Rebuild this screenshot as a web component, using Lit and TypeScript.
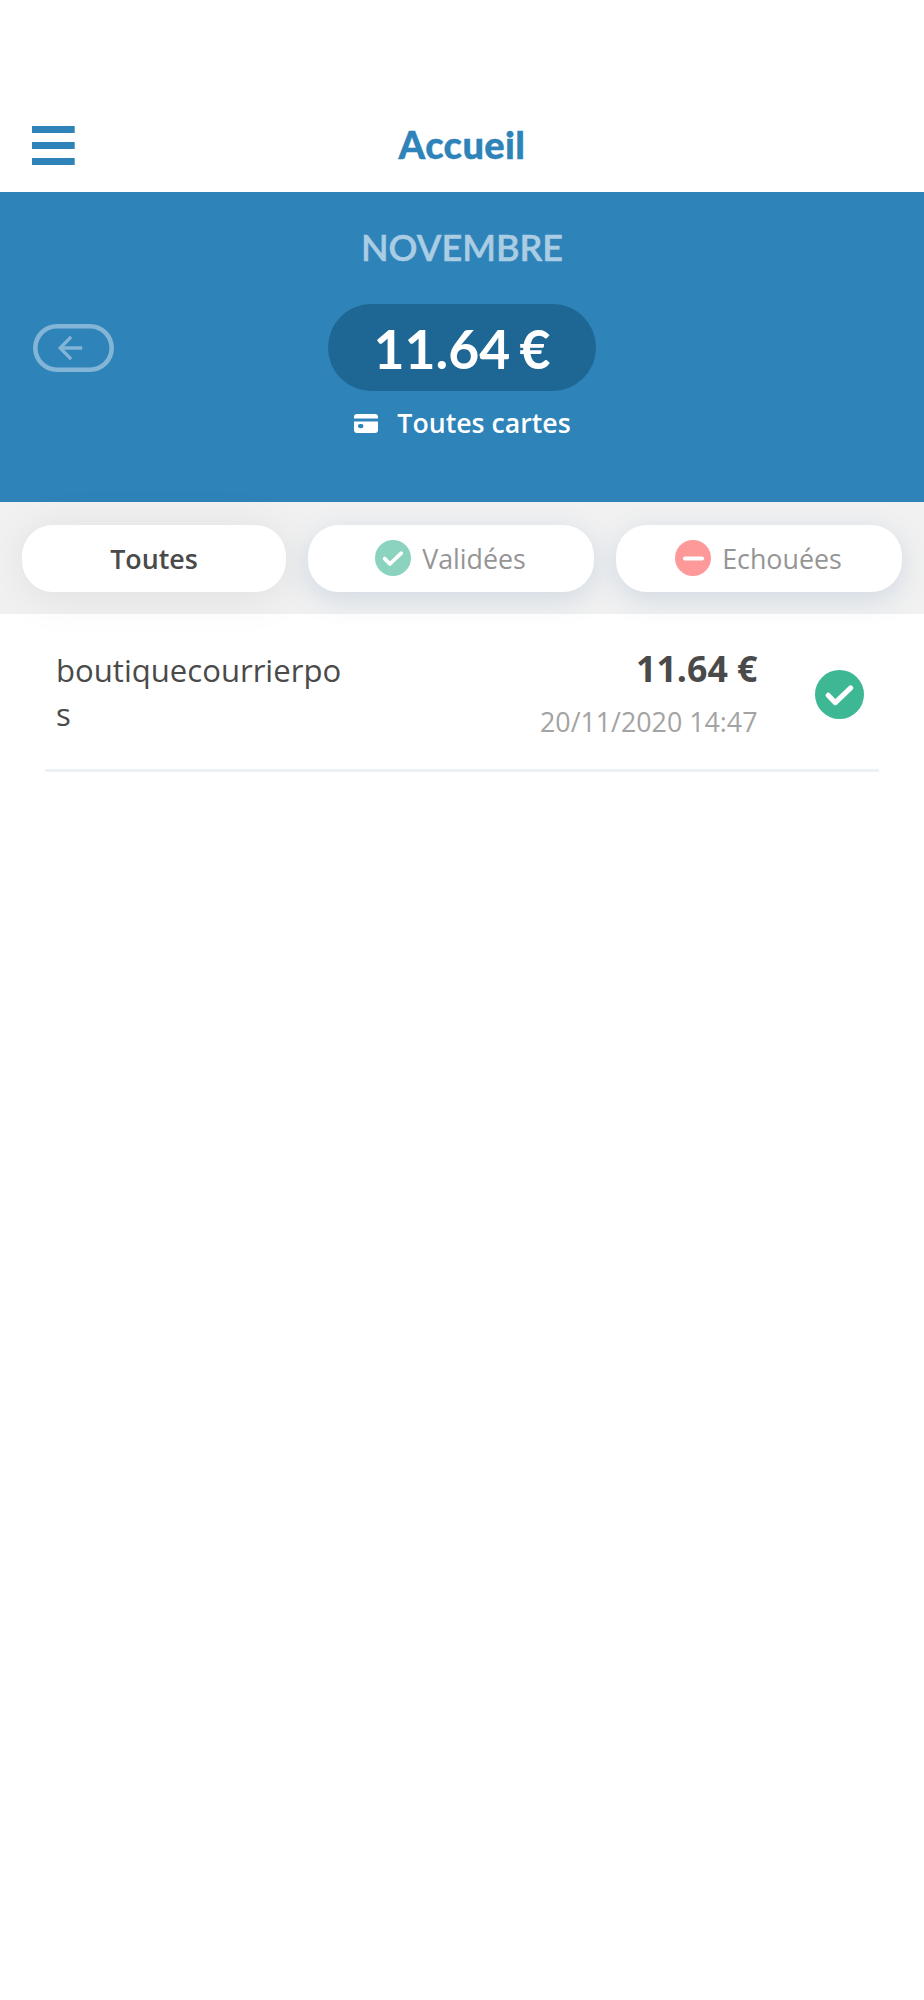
import { LitElement, html, css, svg } from "lit";
import { customElement } from "lit/decorators.js";

const check = svg`<circle cx="24" cy="24" r="24" fill="currentColor"/><path d="M12.9 24.8 19.9 32 35 17.6" fill="none" stroke="#fff" stroke-width="5" stroke-linecap="round" stroke-linejoin="round"/>`;
const minus = svg`<circle cx="24" cy="24" r="24" fill="currentColor"/><path d="M13.3 24.6H36" stroke="#fff" stroke-width="5.4" stroke-linecap="round"/>`;

@customElement("app-root")
export class AppRoot extends LitElement {
  static styles = css`
    :host { display: block; box-sizing: border-box; height: 2000px; overflow: hidden; background: #fff; font-family: "Open Sans", "Noto Sans", sans-serif; color: #4a4a4a; }
    * { box-sizing: border-box; }
    svg { display: block; flex: none; }
    span { white-space: nowrap; }
    .header { display: grid; grid-template-columns: 1fr auto 1fr; height: 192px; padding: 99px 32px 0; align-items: center; color: #2e83b9; }
    .title { margin-top: -4px; font: 900 38px/50px Lato, sans-serif; letter-spacing: 0.4px; -webkit-text-stroke: 0.4px #2e83b9; }
    .hero { display: grid; grid-template-columns: 1fr auto 1fr; height: 310px; padding: 0 33px; background: #2e83b9; color: #fff; }
    .back { width: 81px; height: 48px; margin-top: 131.5px; box-shadow: inset 0 0 0 4.6px #82b5d6; border-radius: 24px; color: #82b5d6; padding: 6px 0 0 19px; }
    .center { display: flex; flex-direction: column; align-items: center; }
    .month { margin-top: 33px; font: 600 36px/44px Lato, sans-serif; color: #abcde3; -webkit-text-stroke: 0.5px #abcde3; }
    .total { display: flex; align-items: center; justify-content: center; width: 268px; height: 87px; margin-top: 35px; border-radius: 44px; background: #1e6794; font: 700 53.5px/66px Lato, sans-serif; word-spacing: -4px; }
    .cards { display: flex; align-items: center; gap: 19px; margin: 13px 0 0 1px; font-size: 26.7px; line-height: 38px; font-weight: 600; }
    .filters { display: grid; grid-template-columns: 264px 286px 286px; gap: 22px; height: 112px; padding: 22.5px 22px; background: #f1f1f1; }
    .pill { display: flex; align-items: center; justify-content: center; gap: 11px; height: 67px; border-radius: 31px; background: #fff; color: #959595; font-size: 26.8px; line-height: 38px; box-shadow: 0 7px 28px rgba(46, 100, 160, .17); }
    .pill span { margin-top: 1px; }
    .pill svg { margin: -1px 0 0 -1px; }
    .active { color: #4a4a4a; font-weight: 600; box-shadow: 0 4px 46px rgba(0, 0, 0, .08); }
    .ok { color: #8bd3bf; }
    .ko { color: #fe999a; }
    .row { display: flex; height: 158px; margin: 0 45px; padding: 0 15.5px 0 11px; border-bottom: 3px solid #eaf2f7; }
    .name { width: 290px; margin-top: 35px; font-size: 31.1px; line-height: 43.5px; overflow-wrap: anywhere; }
    .values { display: flex; flex-direction: column; align-items: flex-end; flex: 1; margin-right: 57px; }
    .amount { margin-top: 29px; font-size: 35.7px; line-height: 50px; font-weight: 700; }
    .date { margin-top: 10px; font-size: 26.8px; line-height: 38px; color: #a3a3a3; }
    .status { color: #3eb795; margin-top: 56px; }
  `;

  render() {
    return html`
      <header class="header">
        <svg width="43" height="40" viewBox="0 0 43 40"><path d="M0 0h42.7v7H0zM0 16h42.7v7H0zM0 32h42.7v7H0z" fill="currentColor"/></svg>
        <span class="title">Accueil</span>
      </header>
      <section class="hero">
        <div class="back"><svg width="36" height="36" viewBox="0 0 24 24"><path d="M20 11H7.83l5.59-5.59L12 4l-8 8 8 8 1.41-1.41L7.83 13H20v-2z" fill="currentColor" stroke="currentColor" stroke-width=".3"/></svg></div>
        <div class="center">
          <span class="month">NOVEMBRE</span>
          <div class="total"><span>11.64 €</span></div>
          <div class="cards">
            <svg width="24" height="19" viewBox="0 0 24 19" fill="currentColor"><path d="M3 0h18a3 3 0 0 1 3 3v1.5H0V3a3 3 0 0 1 3-3z"/><path fill-rule="evenodd" d="M0 7.4h24V16a3 3 0 0 1-3 3H3a3 3 0 0 1-3-3zM6 10a2.1 2.1 0 0 0 0 4.2h1.4a2.1 2.1 0 0 0 0-4.2z"/></svg>
            <span>Toutes cartes</span>
          </div>
        </div>
      </section>
      <nav class="filters">
        <div class="pill active"><span>Toutes</span></div>
        <div class="pill"><svg class="ok" width="36" height="36" viewBox="0 0 48 48">${check}</svg><span>Validées</span></div>
        <div class="pill"><svg class="ko" width="36" height="36" viewBox="0 0 48 48">${minus}</svg><span>Echouées</span></div>
      </nav>
      <article class="row">
        <div class="name">boutiquecourrierpos</div>
        <div class="values"><span class="amount">11.64 €</span><span class="date">20/11/2020 14:47</span></div>
        <svg class="status" width="49" height="49" viewBox="0 0 48 48">${check}</svg>
      </article>
    `;
  }
}
